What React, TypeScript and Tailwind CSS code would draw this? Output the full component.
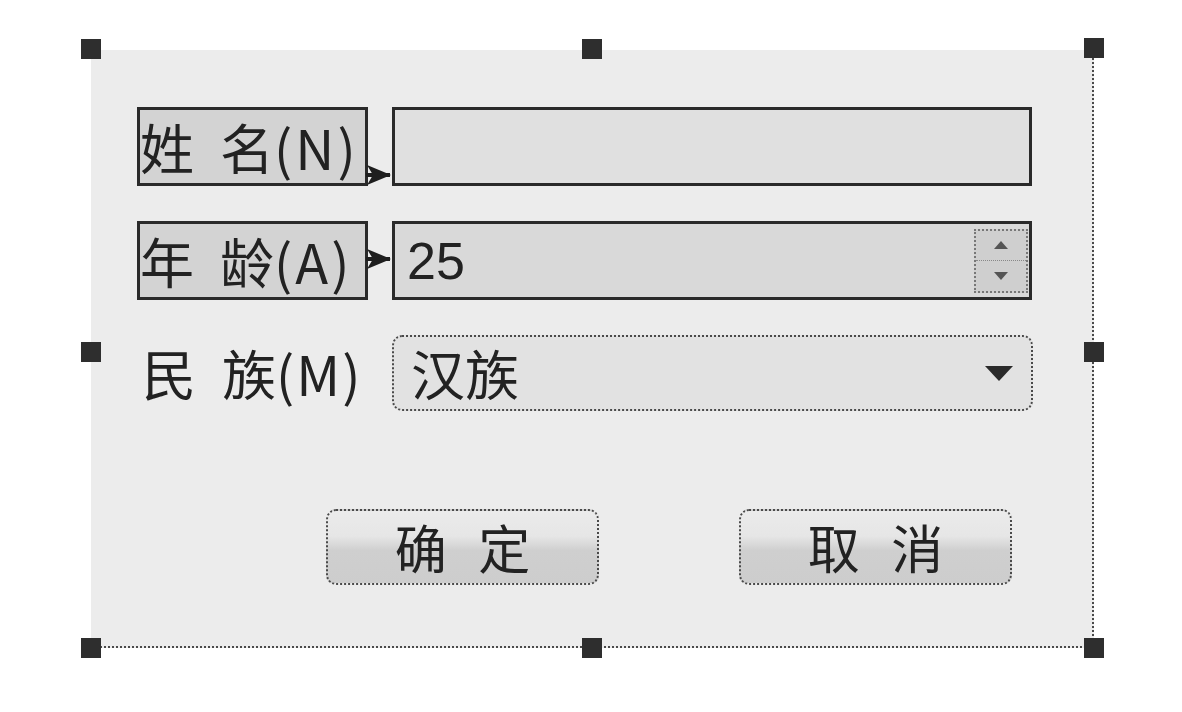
const cjk = "font-['Noto_Sans_CJK_SC','Noto_Sans',sans-serif]";

function Handle({ className }: { className: string }) {
  return <div className={`absolute h-[20px] w-[20px] bg-[#2e2e2e] ${className}`} />;
}

function BuddyArrow({ className }: { className: string }) {
  return (
    <svg className={`absolute ${className}`} width="26" height="22" viewBox="0 0 26 22">
      <polygon points="1,1 25,11 1,21 7,11" fill="#1e1e1e" />
      <line x1="0" y1="11" x2="24" y2="11" stroke="#1e1e1e" strokeWidth="4" />
    </svg>
  );
}

export default function App() {
  return (
    <div className="h-[712px] w-[1182px] overflow-hidden bg-white pl-[91px] pt-[50px] text-[#222]">
      <div className="relative h-[598px] w-[1003px] border-b-2 border-r-2 border-dotted border-[#4a4a4a] bg-[#ececec] pl-[46px] pt-[57px]">
        <Handle className="left-[-10px] top-[-11px]" />
        <Handle className="left-[491px] top-[-11px]" />
        <Handle className="left-[993px] top-[-12px]" />
        <Handle className="left-[-10px] top-[292px]" />
        <Handle className="left-[993px] top-[292px]" />
        <Handle className="left-[-10px] top-[588px]" />
        <Handle className="left-[491px] top-[588px]" />
        <Handle className="left-[993px] top-[588px]" />

        {/* name */}
        <div className="relative flex gap-[24px]">
          <div className={`flex h-[79px] w-[231px] items-center border-[3px] border-[#2a2a2a] bg-[#d3d3d3] text-[54px] leading-none whitespace-pre [word-spacing:14px] ${cjk}`}>
            姓 名<span className="tracking-[3px]">(N)</span>
          </div>
          <div className="h-[79px] w-[640px] border-[3px] border-[#2a2a2a] bg-[#e0e0e0]" />
          <BuddyArrow className="left-[229px] top-[57px]" />
        </div>

        {/* age */}
        <div className="relative mt-[35px] flex gap-[24px]">
          <div className={`flex h-[79px] w-[231px] items-center border-[3px] border-[#2a2a2a] bg-[#d3d3d3] text-[54px] leading-none whitespace-pre [word-spacing:14px] ${cjk}`}>
            年 龄<span className="tracking-[3px]">(A)</span>
          </div>
          <div className="flex h-[79px] w-[640px] items-center border-[3px] border-[#2a2a2a] bg-[#d9d9d9]">
            <span className="flex-1 pl-[12px] font-['Liberation_Sans',sans-serif] text-[52px] leading-none">25</span>
            <div className="mr-[1px] flex h-[64px] w-[54px] flex-col border-2 border-dotted border-[#777] bg-[#cfcfcf]">
              <div className="flex flex-1 items-center justify-center border-b border-dotted border-[#888]">
                <svg width="16" height="10" viewBox="0 0 16 10">
                  <polygon points="8,1 15,9 1,9" fill="#555" />
                </svg>
              </div>
              <div className="flex flex-1 items-center justify-center">
                <svg width="16" height="10" viewBox="0 0 16 10">
                  <polygon points="1,1 15,1 8,9" fill="#555" />
                </svg>
              </div>
            </div>
          </div>
          <BuddyArrow className="left-[229px] top-[27px]" />
        </div>

        {/* nation */}
        <div className="mt-[35px] flex gap-[24px]">
          <div className={`flex h-[76px] w-[231px] items-center pl-[5px] text-[54px] leading-none whitespace-pre [word-spacing:14px] ${cjk}`}>
            民 族<span className="tracking-[2px]">(M)</span>
          </div>
          <div className="flex h-[76px] w-[641px] items-center justify-between rounded-[10px] border-2 border-dotted border-[#4a4a4a] bg-[#e2e2e2] pl-[17px] pr-[18px]">
            <span className={`text-[54px] leading-none ${cjk}`}>汉族</span>
            <svg width="28" height="15" viewBox="0 0 28 15">
              <polygon points="0,0 28,0 14,15" fill="#2a2a2a" />
            </svg>
          </div>
        </div>

        {/* buttons */}
        <div className="ml-[189px] mt-[98px] flex gap-[140px]">
          <button className={`h-[76px] w-[273px] rounded-[10px] border-2 border-dotted border-[#4a4a4a] bg-[linear-gradient(#ebebeb_0%,#e6e6e6_35%,#cfcfcf_55%,#cdcdcd_100%)] text-[52px] leading-none whitespace-pre [word-spacing:20px] ${cjk}`}>
            确 定
          </button>
          <button className={`h-[76px] w-[273px] rounded-[10px] border-2 border-dotted border-[#4a4a4a] bg-[linear-gradient(#ebebeb_0%,#e6e6e6_35%,#cfcfcf_55%,#cdcdcd_100%)] text-[52px] leading-none whitespace-pre [word-spacing:20px] ${cjk}`}>
            取 消
          </button>
        </div>
      </div>
    </div>
  );
}
